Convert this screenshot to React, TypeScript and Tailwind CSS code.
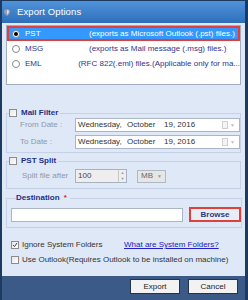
import React from "react";

function Radio({ on }: { on?: boolean }) {
  return (
    <span className="w-[8px] h-[8px] rounded-full border border-[#8a8a8a] bg-white flex items-center justify-center shrink-0">
      {on && <span className="w-[4px] h-[4px] rounded-full bg-black" />}
    </span>
  );
}

function Check({ on }: { on?: boolean }) {
  return (
    <span className="w-[8px] h-[8px] border border-[#8c8c8c] bg-gradient-to-br from-[#e6e6e6] to-[#ffffff] flex items-center justify-center shrink-0">
      {on && (
        <svg width="6" height="6" viewBox="0 0 6 6">
          <path d="M1 3 L2.5 4.6 L5 1" stroke="#444" strokeWidth="1" fill="none" />
        </svg>
      )}
    </span>
  );
}

function DateInput() {
  return (
    <div className="w-[165px] h-[14px] border border-[#aab6c8] bg-white flex items-center pl-[2px] text-[#333] text-[8px]">
      <span className="w-[49px]">Wednesday,</span>
      <span className="w-[37px]">October</span>
      <span className="flex-1">19, 2016</span>
      <span className="w-[6px] h-[8px] border border-[#d0d0d0] bg-[#f4f4f4] mr-[2px]" />
      <span className="text-[#c0c0c0] text-[5px] mr-[4px]">▼</span>
    </div>
  );
}

export default function App() {
  return (
    <div className="w-[248px] h-[300px] bg-[#1d3a60] flex flex-col overflow-hidden font-['Liberation_Sans',Arial,sans-serif] text-[8px] leading-none">
      {/* title bar */}
      <div className="h-[22px] mt-[1px] ml-[2px] mr-[3px] bg-gradient-to-b from-[#4f93da] to-[#2f6fba] flex items-center pl-[1px] gap-[6px]">
        <svg width="8" height="9" viewBox="0 0 8 9">
          <path d="M4 0.5 L7.5 1.8 L7 5.5 L4 8.5 L1 5.5 L0.5 1.8 Z" fill="#8aa0bf" stroke="#5b6f8f" strokeWidth="0.6" />
          <path d="M4 2 L6 2.8 L5.6 5 L4 6.8 Z" fill="#d8e2f0" />
        </svg>
        <span className="text-white text-[9.5px] tracking-[0.1px]">Export Options</span>
      </div>

      {/* body */}
      <div className="flex-1 ml-[2px] mr-[3px] bg-[#dfe8f7] flex flex-col px-[4px] pt-[2px]">
        {/* list box */}
        <div className="h-[60px] border border-[#a2aec0] bg-white flex flex-col text-[#34348a]">
          <div className="h-[15px] border-2 border-[#e0403c] bg-[#3399ff] text-white flex items-center pl-[3px] whitespace-nowrap">
            <Radio on />
            <span className="ml-[5px] w-[64px]">PST</span>
            <span>(exports as Microsoft Outlook (.pst) files.)</span>
          </div>
          <div className="h-[15px] flex items-center pl-[5px] whitespace-nowrap">
            <Radio />
            <span className="ml-[5px] w-[64px]">MSG</span>
            <span>(exports as Mail message (.msg) files.)</span>
          </div>
          <div className="h-[15px] flex items-center pl-[5px] whitespace-nowrap overflow-hidden">
            <Radio />
            <span className="ml-[5px] w-[64px]">EML</span>
            <span>(RFC 822(.eml) files.(Applicable only for ma...</span>
          </div>
        </div>

        {/* mail filter */}
        <fieldset className="mt-[24px] border border-[#c4d1e6] pb-[3px]">
          <legend className="ml-[2px] flex items-center gap-[4px] pr-[2px]">
            <Check />
            <span className="font-bold text-[#1e2f88]">Mail Filter</span>
          </legend>
          <div className="flex flex-col gap-[3px] mt-[1px]">
            <div className="flex items-center">
              <span className="w-[68px] pl-[13px] text-[#8c98aa]">From Date :</span>
              <DateInput />
            </div>
            <div className="flex items-center">
              <span className="w-[68px] pl-[13px] text-[#8c98aa]">To Date :</span>
              <DateInput />
            </div>
          </div>
        </fieldset>

        {/* pst split */}
        <fieldset className="mt-[4px] border border-[#c4d1e6] pb-[5px]">
          <legend className="ml-[2px] flex items-center gap-[4px] pr-[2px]">
            <Check />
            <span className="font-bold text-[#1e2f88]">PST Split</span>
          </legend>
          <div className="flex items-center mt-[4px]">
            <span className="w-[68px] pl-[15px] text-[#8c98aa]">Split file after</span>
            <div className="w-[52px] h-[14px] border border-[#a8b2c0] bg-[#eeeeee] flex items-center pl-[2px] text-[#444]">
              <span className="flex-1">100</span>
              <div className="w-[8px] h-full border-l border-[#c8c8c8] flex flex-col text-[#999] text-[4px] items-center justify-around">
                <span>▲</span>
                <span>▼</span>
              </div>
            </div>
            <div className="ml-[10px] w-[29px] h-[13px] border border-[#b0b8c4] bg-[#e6e6e6] flex items-center pl-[3px] text-[#666]">
              <span className="flex-1">MB</span>
              <span className="text-[5px] text-[#999] mr-[3px]">▼</span>
            </div>
          </div>
        </fieldset>

        {/* destination */}
        <fieldset className="mt-[5px] border border-[#c4d1e6] pb-[5px] pl-[4px]">
          <legend className="ml-[5px] pr-[3px] font-bold text-[#1e2f88]">
            Destination <span className="text-[#e02020] ml-[2px]">*</span>
          </legend>
          <div className="flex items-center mt-[5px] gap-[6px]">
            <div className="w-[172px] h-[14px] border border-[#aab6c8] bg-white" />
            <div className="w-[52px] h-[15px] border-2 border-[#e0403c] bg-[#e9edf5] flex items-center justify-center font-bold text-[#2a3a80]">
              Browse
            </div>
          </div>
        </fieldset>

        {/* options */}
        <div className="mt-[13px] pl-[5px] flex flex-col gap-[7px]">
          <div className="flex items-center">
            <Check on />
            <span className="ml-[3px] w-[102px] text-[#333]">Ignore System Folders</span>
            <span className="text-[#2020c8] underline">What are System Folders?</span>
          </div>
          <div className="flex items-center">
            <Check />
            <span className="ml-[3px] text-[#333]">Use Outlook(Requires Outlook to be installed on machine)</span>
          </div>
        </div>
      </div>

      {/* footer */}
      <div className="h-[24px] ml-[2px] mr-[3px] bg-[#3b5a88] flex items-start justify-end pt-[3px] pr-[7px] gap-[8px]">
        <div className="w-[50px] h-[15px] border border-[#23334d] bg-[#f2f2f2] flex items-center justify-center text-[#222]">Export</div>
        <div className="w-[50px] h-[15px] border border-[#23334d] bg-[#f2f2f2] flex items-center justify-center text-[#222]">Cancel</div>
      </div>
    </div>
  );
}
